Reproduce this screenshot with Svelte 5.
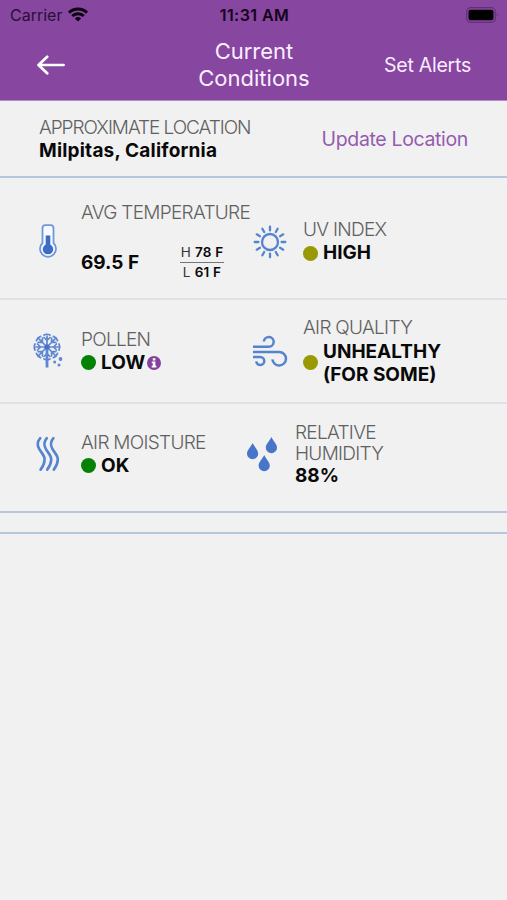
<script>
  const rows = [
    {
      name: "weather",
      cells: [
        { icon: "thermometer", label: "AVG TEMPERATURE", value: "69.5 F", high: "78 F", low: "61 F" },
        { icon: "sun", label: "UV INDEX", value: "HIGH", level: "medium" },
      ],
    },
    {
      name: "air",
      cells: [
        { icon: "pollen", label: "POLLEN", value: "LOW", level: "good", info: true },
        { icon: "wind", label: "AIR QUALITY", value: "UNHEALTHY (FOR SOME)", level: "medium" },
      ],
    },
    {
      name: "moisture",
      cells: [
        { icon: "waves", label: "AIR MOISTURE", value: "OK", level: "good" },
        { icon: "drops", label: "RELATIVE HUMIDITY", value: "88%" },
      ],
    },
  ];

  const rays = [0, 30, 60, 90, 120, 150, 180, 210, 240, 270, 300, 330];
  const spokes = [0, 45, 90, 135, 180, 225, 270, 315];
</script>

<div class="screen">
  <header>
    <div class="status">
      <div class="carrier">
        <span>Carrier</span>
        <svg width="20" height="15" viewBox="0 0 20 15" fill="none" stroke="#0b0210" stroke-width="2.9">
          <path d="M1 5.6a13 13 0 0 1 18 0" />
          <path d="M4.2 9a8.4 8.4 0 0 1 11.6 0" />
          <path d="M10 14.6 6.9 11.5a4.5 4.5 0 0 1 6.2 0z" fill="#0b0210" stroke="none" />
        </svg>
      </div>
      <div class="time">11:31 AM</div>
      <svg class="battery" width="33" height="16" viewBox="0 0 33 16">
        <rect x="0.7" y="0.7" width="28.6" height="14.6" rx="4" fill="none" stroke="#62307a" stroke-width="1.2" />
        <rect x="2.5" y="2.7" width="25" height="10.6" rx="2.2" fill="#000" />
        <path d="M30.8 5.6q1.8 2.2 0 4.6z" fill="#62307a" />
      </svg>
    </div>
    <nav>
      <svg class="back" width="28" height="20" viewBox="0 0 28 20" fill="none" stroke="#fff" stroke-width="2.7" stroke-linecap="round" stroke-linejoin="round">
        <path d="M10.2 1.7 1.5 10l8.700 8.300M2 10h24.600" />
      </svg>
      <h1>Current<br />Conditions</h1>
      <div class="alerts">Set Alerts</div>
    </nav>
  </header>

  <section class="location">
    <div>
      <div class="label">APPROXIMATE LOCATION</div>
      <div class="value">Milpitas, California</div>
    </div>
    <div class="update">Update Location</div>
  </section>

  {#each rows as row}
    <section class="row {row.name}">
      {#each row.cells as cell}
        <div class="cell {cell.icon}">
          <div class="icon">
            {#if cell.icon === "thermometer"}
              <svg width="18" height="36" viewBox="0 0 18 36">
                <path d="M3.500 19V4.200Q3.500 1.200 6.300 1.200h5.400q2.800 0 2.800 3V19a8 8 0 1 1-11 0z" fill="#f7fbff" stroke="#7297d8" stroke-width="1.8" />
                <path d="M6.700 11.500h4.600v9a5.200 5.200 0 1 1-4.600 0z" fill="#3e6bc4" />
              </svg>
            {:else if cell.icon === "sun"}
              <svg width="34" height="34" viewBox="-17 -17 34 34" fill="none" stroke="#5584cf" stroke-width="2.3" stroke-linecap="round">
                <circle r="8" />
                {#each rays as angle}
                  <path d="M0-11.600v-3.700" transform="rotate({angle})" />
                {/each}
              </svg>
            {:else if cell.icon === "pollen"}
              <svg width="31" height="36" viewBox="0 0 31 36" fill="none" stroke="#5e87d1" stroke-width="1.7" stroke-linecap="round">
                <g transform="translate(14 14)">
                  {#each spokes as angle}
                    <path d="M0 0v-11M0-6.500l-3-3M0-6.500l3-3M-3-12q3-1.500 6 0" transform="rotate({angle})" />
                  {/each}
                  <circle r="2.6" fill="#4571c6" stroke="none" />
                </g>
                <path d="M14 16v18.500" stroke-width="2.8" stroke-linecap="butt" />
                <g fill="#5e87d1" stroke="none">
                  <circle cx="27.5" cy="26" r="1.9" />
                  <circle cx="21.7" cy="29" r="1.5" />
                  <circle cx="26" cy="32" r="1.5" />
                </g>
              </svg>
            {:else if cell.icon === "wind"}
              <svg width="36" height="34" viewBox="0 0 36 34" fill="none" stroke="#5584cf" stroke-width="2.5">
                <path d="M1 12.800h15.800a4.900 4.900 0 1 0-4.900-5.300" />
                <path d="M1 17.900h26.200a6.800 6.800 0 1 1-6.800 7.500" />
                <path d="M1 23h7.300a4 4 0 1 1-4 4.300" />
              </svg>
            {:else if cell.icon === "waves"}
              <svg width="24" height="36" viewBox="0 0 24 36" fill="none" stroke="#5584cf" stroke-width="2.6" stroke-linecap="round">
                {#each [0, 6.6, 13.2] as offset}
                  <path d="M4.200 2.200C.8 6.200 1 9.300 3.300 13.200S9 19.800 8.600 23.800Q8.300 28.800 4.600 33.600" transform="translate({offset})" />
                {/each}
              </svg>
            {:else}
              <svg width="32" height="36" viewBox="0 0 32 36" fill="#4776c8">
                {#each [[6.6, 7], [25.4, 1], [18.2, 19]] as [x, y]}
                  <path d="M0 0C1.800 4 5.600 7 5.600 10.700A5.600 5.500 0 0 1-5.600 10.700C-5.600 7-1.800 4 0 0z" transform="translate({x} {y})" />
                {/each}
              </svg>
            {/if}
          </div>

          <div class="reading">
            <div class="label">{cell.label}</div>
            <div class="value">
              {#if cell.level}
                <span class="dot {cell.level}"></span>
              {/if}
              <span class="text">{cell.value}</span>
              {#if cell.info}
                <svg class="info" width="14" height="14" viewBox="0 0 14 14">
                  <circle cx="7" cy="7" r="7" fill="#84429f" />
                  <path d="M5.800 2.300h2.600v2.100H5.800zM4.800 5.500h3.600v4.300h1v1.700H4.700V9.800h1.100V7.200h-1z" fill="#fff" />
                </svg>
              {/if}
              {#if cell.high}
                <div class="range">
                  <div class="high">H <b>{cell.high}</b></div>
                  <div>L <b>{cell.low}</b></div>
                </div>
              {/if}
            </div>
          </div>
        </div>
      {/each}
    </section>
  {/each}
  <div class="spacer"></div>
</div>

<style>
  :global(body) {
    background: #f1f1f1;
  }

  .screen {
    height: 900px;
    box-sizing: border-box;
    background: #f1f1f1;
    color: #090909;
    font-family: Inter, "Liberation Sans", sans-serif;
    font-size: 19px;
    line-height: 22px;
  }

  header {
    height: 101px;
    box-sizing: border-box;
    border-bottom: 1px solid #b58bc6;
    background: #8746a0;
    color: #fbeeff;
  }

  .status {
    display: grid;
    grid-template-columns: 1fr auto 1fr;
    align-items: center;
    height: 29px;
    padding: 0 8px 0 10px;
    color: #13031a;
    font-size: 16px;
  }

  .carrier {
    display: flex;
    align-items: center;
    gap: 6px;
    color: #2a1035;
  }

  .time {
    font-weight: 600;
    letter-spacing: 0.45px;
  }

  .battery {
    justify-self: end;
  }

  nav {
    display: grid;
    grid-template-columns: 1fr auto 1fr;
    align-items: center;
    height: 71px;
    padding: 0 36px 0 37px;
  }

  h1 {
    margin: 0;
    font-size: 22px;
    font-weight: 400;
    line-height: 27px;
    text-align: center;
  }

  .alerts {
    justify-self: end;
    font-size: 19.5px;
    letter-spacing: -0.25px;
  }

  .location {
    display: flex;
    justify-content: space-between;
    height: 77px;
    box-sizing: border-box;
    padding: 16px 39px 0;
    border-bottom: 2px solid #b4c8dc;
  }

  .location .label {
    letter-spacing: -1.05px;
  }

  .location .value {
    margin-top: 1px;
    letter-spacing: 0.2px;
  }

  .update {
    padding-top: 11px;
    color: #955bb0;
    font-size: 19.5px;
    letter-spacing: -0.35px;
  }

  .label {
    color: #606060;
    font-weight: 300;
    letter-spacing: -0.7px;
    white-space: nowrap;
  }

  .value {
    display: flex;
    align-items: center;
    font-weight: 700;
    white-space: nowrap;
  }

  .row {
    display: grid;
    grid-template-columns: 253px 1fr;
    box-sizing: border-box;
    border-bottom: 2px solid #e1e1e3;
  }

  .weather {
    height: 122px;
  }

  .air {
    height: 104px;
  }

  .moisture {
    height: 109px;
    grid-template-columns: 245px 1fr;
    padding-bottom: 7px;
    border-bottom-color: #b9c5db;
  }

  .cell {
    display: grid;
    grid-template-columns: 28px 1fr;
    column-gap: 19px;
    align-items: center;
    padding-left: 34px;
  }

  .cell + .cell {
    grid-template-columns: 34px 1fr;
    column-gap: 16px;
    padding-left: 0;
  }

  .icon {
    display: flex;
    justify-content: center;
  }

  .icon svg {
    flex: none;
  }

  .reading .value {
    margin-top: 1px;
  }

  .dot {
    flex: none;
    width: 15px;
    height: 15px;
    margin-right: 5px;
    border-radius: 50%;
  }

  .good {
    background: #048204;
  }

  .medium {
    background: #999904;
  }

  .info {
    margin-left: 2px;
  }

  .thermometer {
    padding-top: 8px;
  }

  .thermometer .value {
    justify-content: space-between;
    width: 143px;
    margin-top: 19px;
  }

  .sun {
    padding-top: 7px;
  }

  .range {
    width: 44px;
    color: #333;
    font-size: 13.5px;
    font-weight: 400;
    line-height: 19px;
    text-align: center;
    letter-spacing: 0.2px;
  }

  .range b {
    color: #090909;
    font-weight: 600;
  }

  .high {
    border-bottom: 1px solid #777;
  }

  .wind .text {
    width: 120px;
    line-height: 23px;
    white-space: normal;
  }

  .drops .label {
    width: 90px;
    line-height: 21px;
    white-space: normal;
  }

  .spacer {
    height: 21px;
    box-sizing: border-box;
    border-bottom: 2px solid #b9c5db;
  }
</style>
